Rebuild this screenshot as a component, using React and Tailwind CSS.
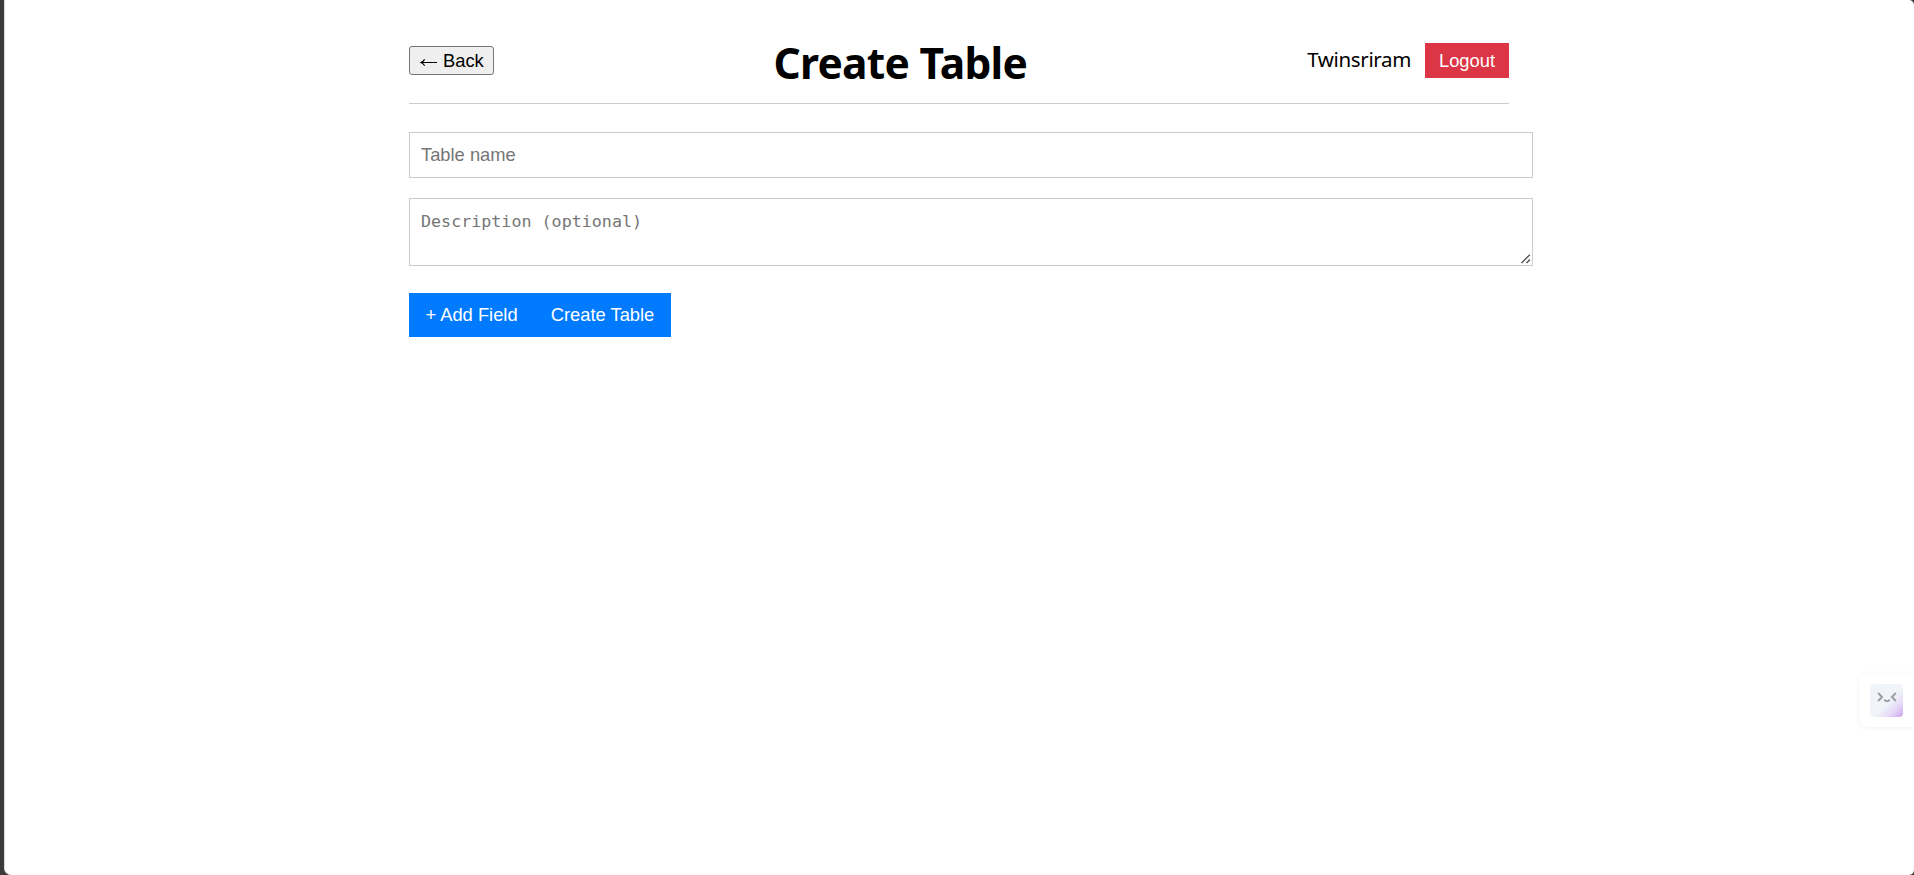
function AssistantTab() {
  return (
    <div className="absolute right-0 top-[673px] flex h-[54px] w-[55px] items-center rounded-l-lg bg-white pl-[11px] shadow-[0_1px_5px_rgba(0,0,0,0.06)]">
      <div className="flex h-[33px] w-[33px] justify-center rounded bg-[linear-gradient(135deg,#f0f5f9_0%,#f1f4f9_55%,#e6d8f8_78%,#c9a0ee_100%)] pt-[8px]">
        <svg width="20" height="12" viewBox="0 0 20 12" fill="none" stroke="#9b9fa8" strokeWidth="2">
          <path d="M1.2 1 5 5 1.2 9M18.8 1 15 5l3.8 4M7.2 7.6q2.8 3.2 5.6 0" />
        </svg>
      </div>
    </div>
  );
}

export default function App() {
  return (
    <div className="relative h-[875px] w-full overflow-hidden bg-[#3b3b3b] pl-1 font-['Liberation_Sans',sans-serif] text-[18.33px] leading-[21px] text-black">
      <div className="h-full rounded-r-[5px] rounded-bl-[7px] border-l border-[#dcdcdc] bg-white pl-[404px]">
        <header className="flex h-[104px] w-[1100px] items-start justify-between border-b border-[#ccc]">
          <button className="mt-[46px] flex h-[29px] w-[85px] items-center gap-[6px] rounded-[3px] border border-[#767676] bg-[#efefef] pl-[10px] whitespace-nowrap">
            <svg
              className="mt-[4px] shrink-0"
              width="17"
              height="9"
              viewBox="0 0 17 9"
              fill="none"
              stroke="#000"
              strokeWidth="1.1"
            >
              <path d="M17 4.5H1.5M4.6 1.2Q3.6 3.6 1 4.5 3.6 5.4 4.6 7.8" />
            </svg>
            <span>Back</span>
          </button>
          <h1 className="mt-[33px] w-[252px] font-['Noto_Sans',sans-serif] text-[42.5px] leading-[60px] font-bold tracking-[-0.75px] whitespace-nowrap">
            Create Table
          </h1>
          <div className="mt-[43px] flex h-[35px] w-[204px] justify-end gap-[14px]">
            <span className="font-['Noto_Sans',sans-serif] text-[20.5px] leading-[32px] tracking-[-0.35px]">
              Twinsriram
            </span>
            <button className="h-[35px] w-[84px] bg-[#dc3545] text-white">Logout</button>
          </div>
        </header>
        <main className="flex flex-col pt-[28px]">
          <input
            placeholder="Table name"
            className="h-[46px] w-[1124px] border border-[#ccc] px-[11px] placeholder:text-[#757575]"
          />
          <div className="relative mt-5 h-[68px] w-[1124px]">
            <textarea
              placeholder="Description (optional)"
              className="block h-full w-full resize-none border border-[#ccc] px-[11px] py-[11px] font-['DejaVu_Sans_Mono',monospace] text-[16.7px] leading-[22px] placeholder:text-[#757575]"
            />
            <svg
              className="absolute right-[1px] bottom-[2px]"
              width="11"
              height="10"
              viewBox="0 0 11 10"
              stroke="#555"
              strokeWidth="1.5"
            >
              <path d="M0.5 9 8.8 0.8M5.5 9 9 5.5" />
            </svg>
          </div>
          <div className="mt-[27px] flex h-[44px] w-[262px] bg-[#007bff] text-white">
            <button className="w-[125px] pb-px">+ Add Field</button>
            <button className="w-[137px] pb-px">Create Table</button>
          </div>
        </main>
      </div>
      <AssistantTab />
    </div>
  );
}
